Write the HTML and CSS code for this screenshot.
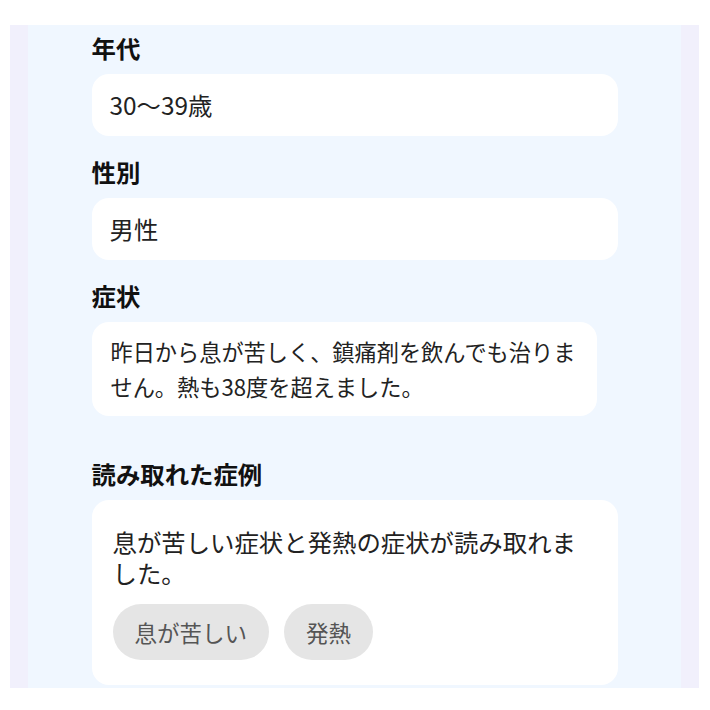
FILE: index.html
```html
<!DOCTYPE html>
<html lang="ja">
<head>
<meta charset="utf-8">
<title>症例</title>
<link rel="stylesheet" href="styles.css">
</head>
<body>
<div class="frame">
  <div class="panel">
    <div class="col">
      <div class="field">
        <div class="label">年代</div>
        <div class="box">30〜39歳</div>
      </div>
      <div class="field">
        <div class="label">性別</div>
        <div class="box">男性</div>
      </div>
      <div class="field field-wide">
        <div class="label">症状</div>
        <div class="box box-text">昨日から息が苦しく、鎮痛剤を飲んでも治りません。熱も38度を超えました。</div>
      </div>
      <div class="field">
        <div class="label">読み取れた症例</div>
        <div class="result">
          <p class="result-text">息が苦しい症状と発熱の症状が読み取れました。</p>
          <div class="chips">
            <span class="chip">息が苦しい</span>
            <span class="chip">発熱</span>
          </div>
        </div>
      </div>
    </div>
  </div>
</div>
</body>
</html>
```

FILE: styles.css
```css
html, body {
  margin: 0;
  padding: 0;
  background: #ffffff;
}
body {
  font-family: "Noto Sans CJK JP", "Noto Sans", sans-serif;
  color: #222222;
}
.frame {
  margin: 25px 11px 0 10px;
  height: 663px;
  padding: 0 18px;
  background: #f1f0fc;
  box-sizing: border-box;
  overflow: hidden;
}
.panel {
  height: 100%;
  background: #f0f7ff;
  padding-top: 5px;
  box-sizing: border-box;
}
.col {
  width: 526px;
  margin: 0 auto;
}
.field {
  margin-bottom: 18px;
}
.field-wide {
  margin-bottom: 40px;
}
.label {
  font-size: 24.4px;
  font-weight: 700;
  line-height: 36px;
  margin-bottom: 8px;
  color: #111111;
}
.box {
  background: #ffffff;
  border-radius: 17px;
  padding: 13px 18px;
  font-size: 24.4px;
  line-height: 36px;
  box-sizing: border-box;
}
.box-text {
  width: 505px;
  padding: 12px 18px 12px 19px;
  font-size: 22.2px;
  line-height: 35px;
}
.result {
  background: #ffffff;
  border-radius: 17px;
  padding: 26px 21px 25px;
}
.result-text {
  margin: 0;
  font-size: 24.4px;
  line-height: 31px;
}
.chips {
  display: flex;
  gap: 15px;
  margin-top: 16px;
}
.chip {
  height: 56px;
  line-height: 56px;
  padding: 0 22px;
  border-radius: 28px;
  background: #e5e5e5;
  color: #555555;
  font-size: 22.5px;
}
```
